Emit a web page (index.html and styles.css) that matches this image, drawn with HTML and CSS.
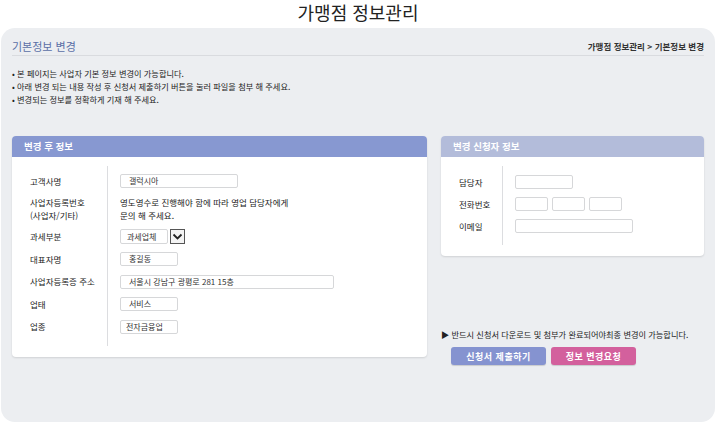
FILE: index.html
```html
<!DOCTYPE html>
<html lang="ko">
<head>
    <meta charset="UTF-8">
    <meta name="viewport" content="width=device-width, initial-scale=1.0">
    <title>가맹점 정보관리</title>
    <link rel="stylesheet" href="styles.css">
</head>
<body>
    <h1 class="page-title">가맹점 정보관리</h1>
    <div class="wrap">
        <div class="top">
            <h2>기본정보 변경</h2>
            <span class="crumb">가맹점 정보관리 &gt; 기본정보 변경</span>
        </div>
        <ul class="guide">
            <li>• 본 페이지는 사업자 기본 정보 변경이 가능합니다.</li>
            <li>• 아래 변경 되는 내용 작성 후 신청서 제출하기 버튼을 눌러 파일을 첨부 해 주세요.</li>
            <li>• 변경되는 정보를 정확하게 기재 해 주세요.</li>
        </ul>

        <div class="boxes">
            <section class="card card-left">
                <div class="card-head">변경 후 정보</div>
                <div class="card-body">
                    <div class="labels">
                        <div class="row">고객사명</div>
                        <div class="row row2">사업자등록번호<br>(사업자/기타)</div>
                        <div class="row">과세부분</div>
                        <div class="row">대표자명</div>
                        <div class="row">사업자등록증 주소</div>
                        <div class="row">업태</div>
                        <div class="row">업종</div>
                    </div>
                    <div class="values">
                        <div class="row"><span class="field w118">갤럭시아</span></div>
                        <div class="row row2">영도영수로 진행해야 함에 따라 영업 담당자에게<br>문의 해 주세요.</div>
                        <div class="row">
                            <span class="field sel">과세업체</span>
                            <span class="arrow">
                                <svg width="11" height="8" viewBox="0 0 11 8"><path d="M1.5 1.5 L5.5 5.5 L9.5 1.5" fill="none" stroke="#222" stroke-width="1.8"/></svg>
                            </span>
                        </div>
                        <div class="row"><span class="field w58">홍길동</span></div>
                        <div class="row"><span class="field w214">서울시 강남구 광평로 281 15층</span></div>
                        <div class="row"><span class="field w58">서비스</span></div>
                        <div class="row"><span class="field w58 tight">전자금융업</span></div>
                    </div>
                </div>
            </section>

            <div class="side">
                <section class="card card-right">
                    <div class="card-head">변경 신청자 정보</div>
                    <div class="card-body">
                        <div class="labels">
                            <div class="row">담당자</div>
                            <div class="row">전화번호</div>
                            <div class="row">이메일</div>
                        </div>
                        <div class="values">
                            <div class="row"><span class="field w58"></span></div>
                            <div class="row phone">
                                <span class="field w33"></span>
                                <span class="field w33"></span>
                                <span class="field w33"></span>
                            </div>
                            <div class="row"><span class="field w118"></span></div>
                        </div>
                    </div>
                </section>

                <p class="notice">▶ 반드시 신청서 다운로드 및 첨부가 완료되어야최종 변경이 가능합니다.</p>
                <div class="buttons">
                    <button class="btn btn-blue">신청서 제출하기</button>
                    <button class="btn btn-pink">정보 변경요청</button>
                </div>
            </div>
        </div>
    </div>
</body>
</html>
```

FILE: styles.css
```css
body {
    margin: 0;
    font-family: "Noto Sans CJK KR", "Noto Sans", sans-serif;
    color: #333;
    background-color: #fff;
}

.page-title {
    margin: 0;
    height: 28px;
    line-height: 24px;
    font-size: 18px;
    font-weight: normal;
    color: #222;
    text-align: center;
}

.wrap {
    margin: 0 1px;
    height: 394px;
    padding: 0 11px;
    background-color: #eceef1;
    border-radius: 14px;
}

.top {
    display: flex;
    justify-content: space-between;
    align-items: center;
    height: 27px;
    border-bottom: 1px solid #d9dbdf;
}

.top h2 {
    margin: 0;
    padding-top: 8px;
    font-size: 11px;
    font-weight: normal;
    color: #5a6ea6;
}

.crumb {
    padding-top: 8px;
    font-size: 8.5px;
    font-weight: bold;
    color: #333;
}

.guide {
    list-style: none;
    margin: 11px 0 0;
    padding: 0;
    font-size: 8.2px;
    line-height: 13px;
    color: #222;
}

.boxes {
    display: flex;
    align-items: flex-start;
    gap: 14px;
    margin-top: 30px;
}

.card {
    background-color: #fff;
    border-radius: 4px;
    overflow: hidden;
    box-shadow: 0 1px 2px rgba(0, 0, 0, 0.12);
}

.card-left {
    width: 415px;
}

.side {
    width: 263px;
}

.card-head {
    height: 21px;
    line-height: 21px;
    padding-left: 12px;
    font-size: 9.5px;
    font-weight: bold;
    color: #fff;
    background-color: #8798d1;
}

.card-right .card-head {
    background-color: #b3bcda;
}

.card-body {
    display: flex;
    padding: 9px 0 11px;
}

.labels {
    width: 77px;
    padding: 4px 0 8px 18px;
    border-right: 1px solid #dcdde0;
    font-size: 8.5px;
    color: #222;
}

.card-right .labels {
    width: 43px;
    padding-top: 5px;
}

.values {
    flex: 1;
    padding: 4px 0 8px 12px;
    font-size: 8.5px;
    color: #222;
}

.card-right .values {
    padding-top: 5px;
}

.row {
    display: flex;
    align-items: center;
    height: 22.5px;
    line-height: 13px;
}

.card-right .row {
    height: 22px;
}

.row2 {
    height: 33px;
}

.field {
    display: inline-block;
    box-sizing: border-box;
    height: 14px;
    line-height: 12px;
    padding-left: 8px;
    border: 1px solid #d6d7d9;
    border-radius: 2px;
    background-color: #fff;
    font-size: 8px;
    color: #333;
}

.w33 { width: 33px; }
.w58 { width: 58px; }
.w118 { width: 118px; }
.w214 { width: 214px; }

.tight {
    padding-left: 5px;
}

.phone {
    gap: 4px;
}

.sel {
    width: 48px;
    height: 15px;
    line-height: 13px;
    padding-left: 6px;
}

.arrow {
    display: inline-flex;
    align-items: center;
    justify-content: center;
    box-sizing: border-box;
    width: 15px;
    height: 15px;
    margin-left: 2px;
    border: 1px solid #555;
    background-color: #f4f4f4;
}

.notice {
    margin: 72px 0 0;
    font-size: 8.2px;
    line-height: 12px;
    color: #222;
}

.buttons {
    display: flex;
    gap: 5px;
    margin-top: 7px;
    padding-left: 10px;
}

.btn {
    height: 18px;
    padding: 0;
    border: none;
    border-radius: 3px;
    font-family: inherit;
    font-size: 9px;
    font-weight: bold;
    letter-spacing: 0.5px;
    color: #fff;
    box-shadow: 0 1px 1px rgba(0, 0, 0, 0.15);
}

.btn-blue {
    width: 95px;
    background-color: #8593d0;
}

.btn-pink {
    width: 85px;
    background-color: #d3609d;
}
```
